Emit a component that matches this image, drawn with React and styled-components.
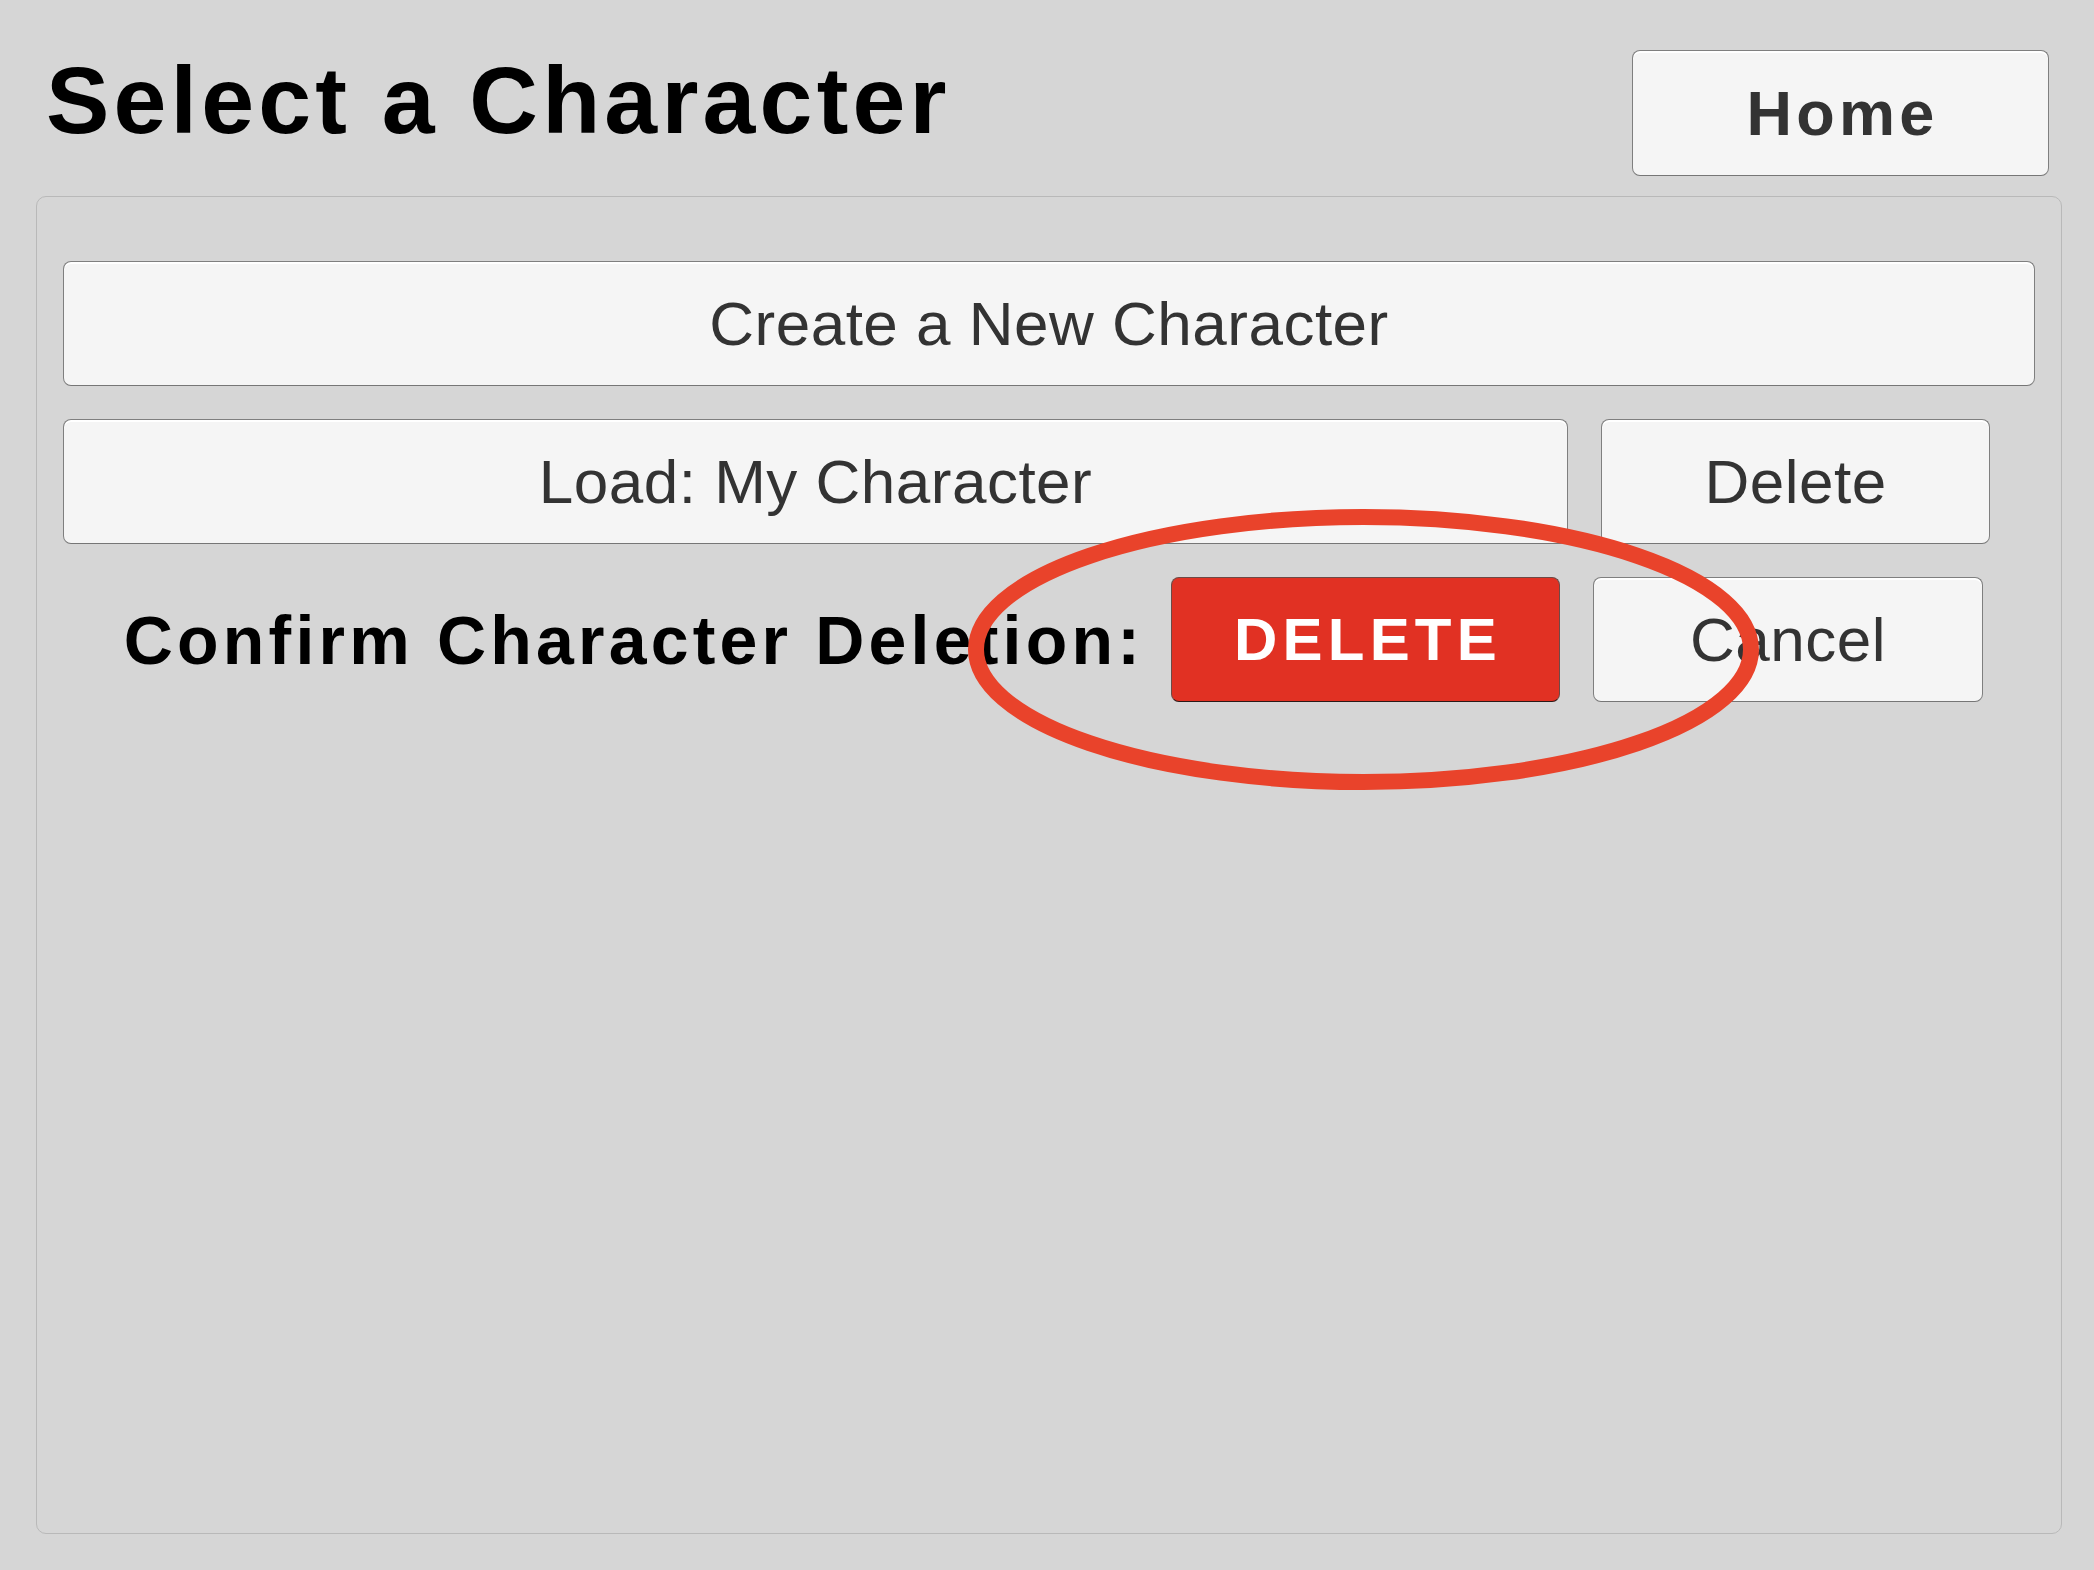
import React from "react";
import styled, { createGlobalStyle } from "styled-components";

const GlobalStyle = createGlobalStyle`
  html, body {
    margin: 0;
    padding: 0;
    background: #d6d6d6;
  }
  body {
    font-family: "Liberation Sans", Arial, sans-serif;
  }
  * { box-sizing: border-box; }
`;

const Page = styled.div`
  position: relative;
  min-height: 100vh;
  display: flex;
  flex-direction: column;
  background: #d6d6d6;
`;

const Header = styled.header`
  display: flex;
  align-items: flex-start;
  justify-content: space-between;
  padding: 50px 45px 0 46px;
`;

const Title = styled.h1`
  margin: 3px 0 0 0;
  font-family: "Liberation Sans", Arial, sans-serif;
  font-weight: 700;
  font-size: 95px;
  line-height: 1;
  letter-spacing: 4.2px;
  color: #000;
`;

const Button = styled.button`
  height: 125px;
  width: ${(p) => (p.$width ? `${p.$width}px` : "auto")};
  flex: ${(p) => (p.$grow ? "1 1 auto" : "0 0 auto")};
  display: flex;
  align-items: center;
  justify-content: center;
  padding: 0;
  font-family: "Liberation Sans", Arial, sans-serif;
  font-size: 62px;
  font-weight: 400;
  letter-spacing: 0.5px;
  color: #333;
  background: #f5f5f5;
  border: 1.5px solid #7f7f7f;
  border-bottom-color: #767676;
  border-radius: 8px;
  box-shadow: inset 0 2px 0 #ffffff;
  cursor: pointer;
`;

const WideButton = styled(Button)`
  align-self: stretch;
  flex: 0 0 auto;
`;

const HomeButton = styled(Button)`
  width: 417px;
  height: 126px;
  font-size: 63px;
  font-weight: 700;
  letter-spacing: 4.3px;
  padding-left: 4px;
`;

const DangerButton = styled(Button)`
  background: #e13123;
  color: #ffffff;
  font-size: 60px;
  font-weight: 700;
  letter-spacing: 5.2px;
  padding-left: 5px;
  border: 1.5px solid #6e4a46;
  border-bottom-color: #2c1a18;
  box-shadow: none;
`;

const Panel = styled.main`
  flex: 1 1 auto;
  margin: 20px 32px 36px 36px;
  padding: 64px 26px 0 26px;
  border: 1.5px solid #b9b9b9;
  border-radius: 10px;
  display: flex;
  flex-direction: column;
  gap: 33px;
`;

const Row = styled.div`
  display: flex;
  align-items: center;
  gap: 33px;
  padding-right: ${(p) => p.$padRight || 0}px;
  justify-content: ${(p) => p.$justify || "flex-start"};
`;

const ConfirmLabel = styled.span`
  font-family: "Liberation Sans", Arial, sans-serif;
  font-weight: 700;
  font-size: 68px;
  letter-spacing: 4.2px;
  color: #000;
  margin-right: -6px;
  white-space: nowrap;
`;

const Annotation = styled.svg`
  position: absolute;
  left: 960px;
  top: 500px;
  width: 808px;
  height: 300px;
  pointer-events: none;
  overflow: visible;
`;

export default function App() {
  return (
    <Page>
      <GlobalStyle />
      <Header>
        <Title>Select a Character</Title>
        <HomeButton>Home</HomeButton>
      </Header>
      <Panel>
        <WideButton>Create a New Character</WideButton>
        <Row $padRight={45}>
          <Button $grow>Load: My Character</Button>
          <Button $width={389}>Delete</Button>
        </Row>
        <Row $padRight={52} $justify="flex-end">
          <ConfirmLabel>Confirm Character Deletion:</ConfirmLabel>
          <DangerButton $width={389}>DELETE</DangerButton>
          <Button $width={390}>Cancel</Button>
        </Row>
      </Panel>
      <Annotation viewBox="0 0 808 300">
        <ellipse
          cx="403.5"
          cy="149.5"
          rx="387.5"
          ry="132.5"
          fill="none"
          stroke="#e9432b"
          strokeWidth="16"
        />
      </Annotation>
    </Page>
  );
}
